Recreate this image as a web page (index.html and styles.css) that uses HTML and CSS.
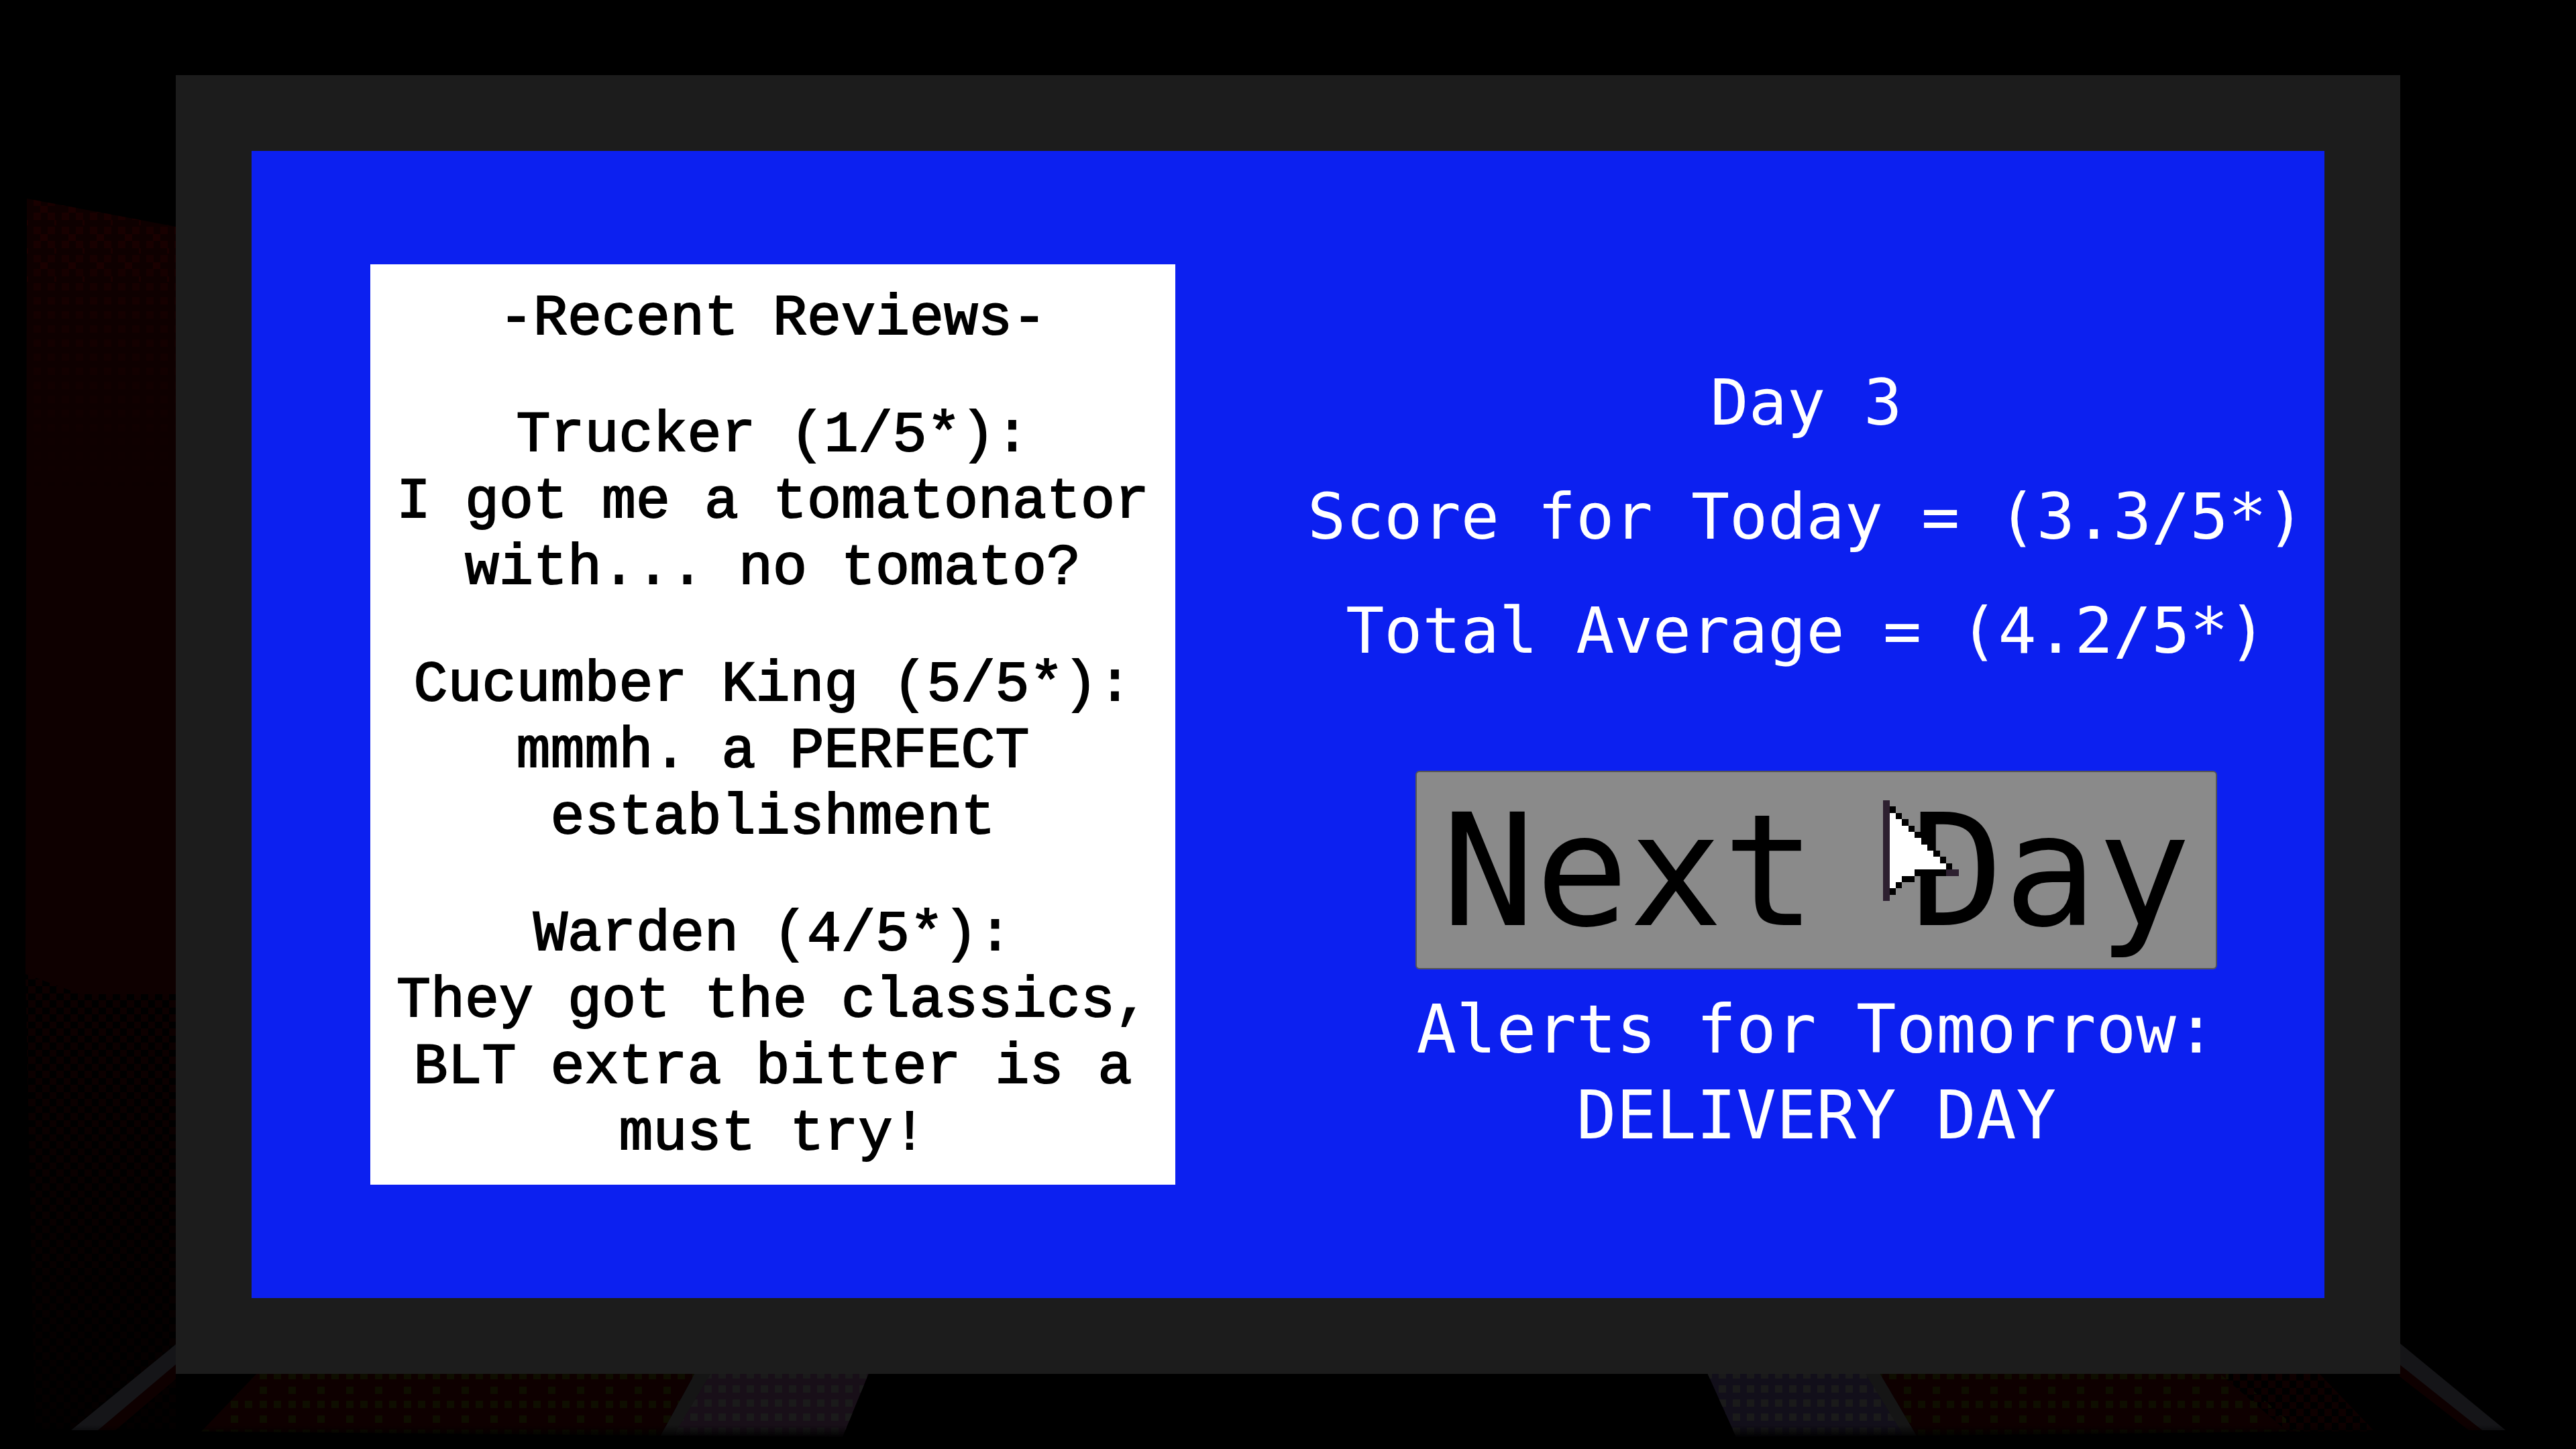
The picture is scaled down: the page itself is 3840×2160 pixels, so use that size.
FILE: index.html
```html
<!DOCTYPE html>
<html lang="en">

<head>
    <meta charset="UTF-8">
    <title>Next Day</title>
    <link rel="stylesheet" href="styles.css">
</head>

<body>
    <svg class="scene" viewBox="0 0 3840 2160" preserveAspectRatio="none" aria-hidden="true">
        <defs>
            <pattern id="dots" width="21" height="21" patternUnits="userSpaceOnUse">
                <rect x="8" y="2" width="11" height="11" fill="#1a0000" />
            </pattern>
            <pattern id="dotsTop" width="42" height="42" patternUnits="userSpaceOnUse">
                <rect x="18" y="13" width="11" height="10" fill="#1a0000" />
                <rect x="39" y="34" width="11" height="10" fill="#1a0000" />
            </pattern>
            <pattern id="weave" width="21" height="21" patternUnits="userSpaceOnUse">
                <rect x="0" y="0" width="11" height="11" fill="#0e0000" />
                <rect x="11" y="11" width="10" height="10" fill="#0e0000" />
            </pattern>
            <pattern id="floor" width="43" height="43" patternUnits="userSpaceOnUse">
                <rect x="0" y="3" width="11" height="11" fill="#0e0e00" />
                <rect x="21" y="24" width="11" height="11" fill="#0e0e00" />
                <rect x="0" y="24" width="11" height="11" fill="#0e0e00" />
            </pattern>
            <pattern id="tiles" width="21" height="21" patternUnits="userSpaceOnUse">
                <rect x="0" y="7" width="11" height="11" fill="#1a1a1a" />
            </pattern>
            <linearGradient id="fadeDown" x1="0" y1="0" x2="0" y2="1">
                <stop offset="0" stop-color="#fff" />
                <stop offset="1" stop-color="#000" />
            </linearGradient>
            <linearGradient id="fadeHalf" x1="0" y1="0" x2="0" y2="1">
                <stop offset="0" stop-color="#fff" />
                <stop offset="1" stop-color="#444" />
            </linearGradient>
            <linearGradient id="edge" x1="0" y1="0" x2="0" y2="1">
                <stop offset="0" stop-color="#000" stop-opacity="0" />
                <stop offset="1" stop-color="#000" />
            </linearGradient>
            <mask id="fade">
                <rect x="0" y="296" width="300" height="430" fill="url(#fadeDown)" />
            </mask>
            <mask id="fadeLow">
                <rect x="0" y="1450" width="300" height="700" fill="url(#fadeHalf)" />
            </mask>
        </defs>

        <!-- wall -->
        <polygon points="40,296 262,338 262,1482 120,1482 38,1452" fill="#0e0000" />
        <polygon points="40,296 262,338 262,726 40,726" fill="url(#dots)" mask="url(#fade)" />
        <polygon points="40,296 262,338 262,420 40,420" fill="url(#dotsTop)" />
        <polygon points="38,1450 120,1482 262,1482 262,2130 52,2130" fill="url(#weave)" mask="url(#fadeLow)" />

        <!-- floor, left -->
        <polygon points="262,2004 262,2050 160,2132 106,2132" fill="#151518" />
        <polygon points="262,2034 262,2056 172,2132 146,2132" fill="#0e0000" />
        <polygon points="390,2040 1040,2040 985,2140 300,2134" fill="#0e0000" />
        <polygon points="390,2040 1040,2040 985,2140 300,2134" fill="url(#floor)" />
        <polygon points="1040,2040 1298,2040 1256,2142 985,2140" fill="#180f18" />
        <polygon points="1040,2040 1298,2040 1256,2142 985,2140" fill="url(#tiles)" />
        <polygon points="1040,2040 1064,2040 1004,2140 985,2140" fill="#151515" />

        <!-- floor, right -->
        <polygon points="2542,2040 2798,2040 2857,2140 2588,2142" fill="#120f1a" />
        <polygon points="2542,2040 2798,2040 2857,2140 2588,2142" fill="url(#tiles)" />
        <polygon points="2776,2040 2798,2040 2857,2140 2838,2140" fill="#151515" />
        <polygon points="2798,2040 3300,2040 3410,2134 2857,2140" fill="#0e0000" />
        <polygon points="2798,2040 3320,2040 3430,2134 2857,2140" fill="url(#floor)" />
        <polygon points="3300,2040 3450,2040 3540,2134 3410,2134" fill="url(#weave)" />
        <polygon points="3577,2002 3735,2132 3700,2132 3577,2040" fill="#151518" />
        <polygon points="3577,2034 3700,2132 3680,2132 3577,2052" fill="#0e0000" />
        <rect x="0" y="2124" width="3840" height="20" fill="url(#edge)" />
    </svg>

    <main class="monitor">
        <section class="reviews">
            <h1>-Recent Reviews-</h1>
            <p>Trucker (1/5*):<br>I got me a tomatonator<br>with... no tomato?</p>
            <p>Cucumber King (5/5*):<br>mmmh. a PERFECT<br>establishment</p>
            <p>Warden (4/5*):<br>They got the classics,<br>BLT extra bitter is a<br>must try!</p>
        </section>

        <section class="summary">
            <div class="scores">
                <h2>Day 3</h2>
                <p>Score for Today = (3.3/5*)</p>
                <p>Total Average = (4.2/5*)</p>
            </div>
            <div class="actions">
                <button type="button" class="next">
                    Next Day
                    <svg class="cursor" viewBox="0 0 12 16" shape-rendering="crispEdges" aria-hidden="true">
                        <path fill="#fff" d="M1 2h1v1h1v1h1v1h1v1h1v1h1v1h1v1h1v1h1v1H5v1H3v1H2v1H1z" />
                        <path fill="#2d2030" d="M0 0h1v16H0zM10 11h2v1h-2z" />
                        <path fill="#000" d="M1 1h1v1H1zM2 2h1v1H2zM3 3h1v1H3zM4 4h1v1H4zM5 5h1v1H5zM6 6h1v1H6zM7 7h1v1H7zM8 8h1v1H8zM9 9h1v1H9zM10 10h1v1h-1zM5 11h5v1H5zM3 12h2v1H3zM2 13h1v1H2zM1 14h1v1H1z" />
                    </svg>
                </button>
                <p>Alerts for Tomorrow:<br>DELIVERY DAY</p>
            </div>
        </section>
    </main>
</body>

</html>
```
FILE: styles.css
```css
* {
    box-sizing: border-box;
}

body {
    margin: 0;
    min-height: 100vh;
    padding: 112px 262px 112px 262px;
    display: flex;
    background: #000;
    font-family: "DejaVu Sans Mono", monospace;
    text-align: center;
}

h1,
h2,
p {
    margin: 0;
    font-size: inherit;
    font-weight: normal;
    white-space: nowrap;
}

.scene {
    position: absolute;
    top: 0;
    left: 0;
    width: 100%;
    height: 100%;
}

.monitor {
    position: relative;
    flex: 1;
    display: grid;
    grid-template-columns: minmax(0, 1fr) minmax(0, 1fr);
    border: 113px solid #1c1c1c;
    background: #0c20f0;
}

.reviews {
    display: flex;
    flex-direction: column;
    gap: 75px;
    margin: 169px 168px 169px 177px;
    padding-top: 32px;
    background: #fff;
    color: #000;
    font-family: "Liberation Mono", monospace;
    font-size: 85px;
    line-height: 99px;
    -webkit-text-stroke: 2px #000;
}

.summary {
    color: #fff;
}

.scores {
    padding-top: 290px;
    font-size: 95px;
    line-height: 170px;
}

.actions {
    margin: 124px 160px 0 190px;
    font-size: 99px;
    line-height: 128px;
}

.next {
    position: relative;
    width: 100%;
    height: 296px;
    margin-bottom: 26px;
    padding: 4px 0 0;
    border: 2px solid #555;
    border-radius: 6px;
    background: #8a8a8a;
    color: #000;
    font-family: inherit;
    font-size: 232px;
    line-height: 288px;
    white-space: nowrap;
}

/* pointer lies over the button label */
.cursor {
    position: absolute;
    top: 42px;
    left: 695px;
    width: 113px;
    height: 150px;
}
```
